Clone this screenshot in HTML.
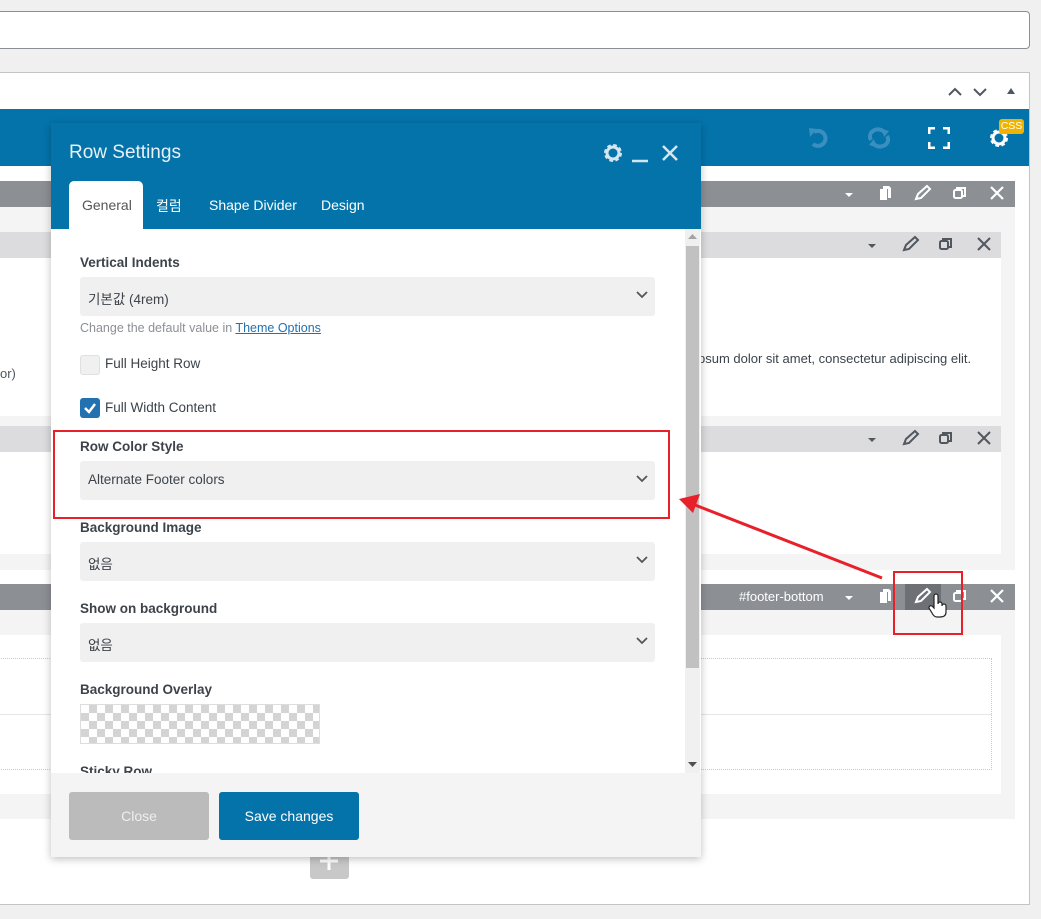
<!DOCTYPE html>
<html><head><meta charset="utf-8"><style>
*{box-sizing:border-box;margin:0;padding:0}
body{width:1041px;height:919px;background:#f0f0f1;position:relative;overflow:hidden;font-family:"Liberation Sans","Noto Sans CJK KR",sans-serif;color:#3c434a}
.a{position:absolute}
.ico{position:absolute}
.lbl{position:absolute;left:80px;font-size:13.5px;font-weight:bold;color:#3c434a}
.sel{position:absolute;left:80px;width:575px;height:39px;background:#f0f0f0;border-radius:3px;font-size:13.5px;color:#3c434a;padding:11px 8px}
.sel svg{position:absolute;right:7px;top:14px}
</style></head><body>
<div class="a" style="left:-4px;top:11px;width:1034px;height:38px;background:#fff;border:1px solid #8c8f94;border-radius:4px"></div>
<div class="a" style="left:-2px;top:72px;width:1032px;height:833px;background:#fff;border:1px solid #c3c4c7"></div>
<svg class="ico" style="left:946px;top:84px" width="70" height="14" viewBox="0 0 70 14">
<path d="M3 11 L9 5 L15 11" stroke="#50575e" stroke-width="2" fill="none"/>
<path d="M28 5 L34 11 L40 5" stroke="#50575e" stroke-width="2" fill="none"/>
<path d="M61 10 L65 4 L69 10Z" fill="#50575e"/></svg>
<div class="a" style="left:0;top:109px;width:1029px;height:57px;background:#0473aa"></div>
<svg class="ico" style="left:806px;top:125px" width="26" height="26" viewBox="0 0 26 26"><path d="M8 7 A7.5 7.5 0 1 1 7 19" stroke="#3b8fbf" stroke-width="4" fill="none"/><path d="M3 3 L11 4 L4 12Z" fill="#3b8fbf"/></svg>
<svg class="ico" style="left:866px;top:126px" width="26" height="24" viewBox="0 0 26 24"><path d="M5 14 A8 7 0 0 1 19 7 M21 10 A8 7 0 0 1 7 17" stroke="#3b8fbf" stroke-width="4" fill="none"/><path d="M16 3 L23 5 L18 11Z M10 21 L3 19 L8 13Z" fill="#3b8fbf"/></svg>
<svg class="ico" style="left:928px;top:127px" width="22" height="22" viewBox="0 0 22 22"><path d="M1 7V1H7 M15 1H21V7 M21 15V21H15 M7 21H1V15" stroke="#fff" stroke-width="3" fill="none"/></svg>
<svg class="ico" style="left:988px;top:127px" width="22" height="22" viewBox="0 0 22 22"><circle cx="11" cy="11" r="7" stroke="#fff" stroke-width="4" fill="none" stroke-dasharray="3.2 2.3"/><circle cx="11" cy="11" r="6" stroke="#fff" stroke-width="3" fill="none"/></svg>
<div class="a" style="left:999px;top:119px;width:25px;height:15px;background:#f0b400;border-radius:3px;color:#fff;font-size:10.5px;text-align:center;line-height:15px">CSS</div>
<div class="a" style="left:0;top:181px;width:1015px;height:26px;background:#8c8f94"></div>
<div class="a" style="left:0;top:207px;width:1015px;height:363px;background:#f4f4f4"></div>
<div class="a" style="left:0;top:232px;width:1001px;height:26px;background:#dcdcde"></div>
<div class="a" style="left:0;top:258px;width:1001px;height:158px;background:#fff"></div>
<div class="a" style="left:0;top:426px;width:1001px;height:26px;background:#dcdcde"></div>
<div class="a" style="left:0;top:452px;width:1001px;height:102px;background:#fff"></div>
<div class="a" style="left:0;top:366px;font-size:13px;color:#50575e">or)</div>
<div class="a" style="left:698px;top:351px;font-size:13px;color:#3c434a">psum dolor sit amet, consectetur adipiscing elit.</div>
<div class="a" style="left:0;top:584px;width:1015px;height:26px;background:#8c8f94"></div>
<div class="a" style="left:0;top:610px;width:1015px;height:209px;background:#f4f4f4"></div>
<div class="a" style="left:0;top:635px;width:1001px;height:159px;background:#fff"></div>
<div class="a" style="left:-2px;top:658px;width:994px;height:112px;border:1px dotted #c8c8c8"></div>
<div class="a" style="left:0;top:714px;width:992px;height:1px;background:#e6e6e6"></div>
<div class="a" style="left:739px;top:589px;font-size:13px;color:#fff">#footer-bottom</div>
<div class="a" style="left:905px;top:584px;width:36px;height:26px;background:#6d7074"></div>
<svg class="ico" style="left:840px;top:183px" width="170" height="22" viewBox="0 0 170 22">
<path d="M5 10 L13 10 L9 14Z" fill="#fff"/>
<path d="M40 6h7v11h-7z" fill="#fff"/><path d="M43 3h6l2 2v10h-3V6h-5z" fill="#fff"/>
<path d="M76 16 L78 11 L87 3 L90 6 L81 15Z" stroke="#fff" stroke-width="2" fill="none"/>
<rect x="114" y="7" width="8" height="8" rx="1.5" stroke="#fff" stroke-width="2" fill="none"/><path d="M117 7V5h8v8h-3" stroke="#fff" stroke-width="2" fill="none"/>
<path d="M151 4 L163 16 M163 4 L151 16" stroke="#fff" stroke-width="2.2"/></svg>
<svg class="ico" style="left:864px;top:234px" width="140" height="22" viewBox="0 0 140 22">
<path d="M4 10 L12 10 L8 14Z" fill="#50575e"/>
<path d="M40 16 L42 11 L51 3 L54 6 L45 15Z" stroke="#50575e" stroke-width="2" fill="none"/>
<rect x="76" y="7" width="8" height="8" rx="1.5" stroke="#50575e" stroke-width="2" fill="none"/><path d="M79 7V5h8v8h-3" stroke="#50575e" stroke-width="2" fill="none"/>
<path d="M114 4 L126 16 M126 4 L114 16" stroke="#50575e" stroke-width="2"/></svg>
<svg class="ico" style="left:864px;top:428px" width="140" height="22" viewBox="0 0 140 22">
<path d="M4 10 L12 10 L8 14Z" fill="#50575e"/>
<path d="M40 16 L42 11 L51 3 L54 6 L45 15Z" stroke="#50575e" stroke-width="2" fill="none"/>
<rect x="76" y="7" width="8" height="8" rx="1.5" stroke="#50575e" stroke-width="2" fill="none"/><path d="M79 7V5h8v8h-3" stroke="#50575e" stroke-width="2" fill="none"/>
<path d="M114 4 L126 16 M126 4 L114 16" stroke="#50575e" stroke-width="2"/></svg>
<svg class="ico" style="left:840px;top:586px" width="170" height="22" viewBox="0 0 170 22">
<path d="M5 10 L13 10 L9 14Z" fill="#fff"/>
<path d="M40 6h7v11h-7z" fill="#fff"/><path d="M43 3h6l2 2v10h-3V6h-5z" fill="#fff"/>
<path d="M76 16 L78 11 L87 3 L90 6 L81 15Z" stroke="#fff" stroke-width="2" fill="none"/>
<rect x="114" y="7" width="8" height="8" rx="1.5" stroke="#fff" stroke-width="2" fill="none"/><path d="M117 7V5h8v8h-3" stroke="#fff" stroke-width="2" fill="none"/>
<path d="M151 4 L163 16 M163 4 L151 16" stroke="#fff" stroke-width="2.2"/></svg>
<svg class="ico" style="left:928px;top:593px" width="20" height="26" viewBox="0 0 20 26"><path d="M6 3 a2 2 0 0 1 4 0 v8 a2 2 0 0 1 4 0 v2 a2 2 0 0 1 4 0 v6 q0 5 -6 5 h-3 q-3 0 -5 -4 l-3 -5 a2 2 0 0 1 3 -2 l2 2Z" fill="#fff" stroke="#222" stroke-width="1.2"/></svg>
<div class="a" style="left:310px;top:837px;width:39px;height:42px;background:#c8c8c8;border-radius:3px"></div>
<svg class="ico" style="left:318px;top:850px" width="22" height="22"><path d="M11 2V20M2 11H20" stroke="#fff" stroke-width="3"/></svg>
<div class="a" style="left:51px;top:123px;width:650px;height:734px;background:#fff;box-shadow:0 2px 8px rgba(0,0,0,.25)"></div>
<div class="a" style="left:51px;top:123px;width:650px;height:106px;background:#0473aa"></div>
<div class="a" style="left:69px;top:142px;font-size:19px;color:#e8f1f7">Row Settings</div>
<svg class="ico" style="left:602px;top:142px" width="80" height="22" viewBox="0 0 80 22">
<circle cx="11" cy="11" r="7" stroke="#d5e6f0" stroke-width="4" fill="none" stroke-dasharray="3.2 2.3"/><circle cx="11" cy="11" r="6" stroke="#d5e6f0" stroke-width="3" fill="none"/>
<path d="M30 19H46" stroke="#d5e6f0" stroke-width="2.5"/>
<path d="M61 4 L75 18 M75 4 L61 18" stroke="#d5e6f0" stroke-width="2.5"/></svg>
<div class="a" style="left:69px;top:181px;width:74px;height:48px;background:#fff;border-radius:5px 5px 0 0"></div>
<div class="a" style="left:82px;top:197px;font-size:14px;color:#555">General</div>
<div class="a" style="left:156px;top:196px;font-size:14px;color:#fff">컬럼</div>
<div class="a" style="left:209px;top:197px;font-size:14px;color:#fff">Shape Divider</div>
<div class="a" style="left:321px;top:197px;font-size:14px;color:#fff">Design</div>
<div class="a" style="left:685px;top:229px;width:15px;height:544px;background:#f0f0f0"></div>
<div class="a" style="left:686px;top:246px;width:13px;height:422px;background:#c1c1c1"></div>
<svg class="ico" style="left:688px;top:234px" width="9" height="6"><path d="M0 5L4.5 0L9 5Z" fill="#a3a3a3"/></svg>
<svg class="ico" style="left:688px;top:762px" width="9" height="6"><path d="M0 0L4.5 5L9 0Z" fill="#505050"/></svg>
<div class="lbl" style="top:255px">Vertical Indents</div>
<div class="sel" style="top:277px">기본값 (4rem)<svg width="12" height="8"><path d="M1 1L6 6L11 1" stroke="#555" stroke-width="1.8" fill="none"/></svg></div>
<div class="a" style="left:80px;top:321px;font-size:12.5px;color:#8c8f94">Change the default value in <span style="color:#2271b1;text-decoration:underline">Theme Options</span></div>
<div class="a" style="left:80px;top:355px;width:20px;height:20px;background:#f0f0f0;border:1px solid #e0e0e0;border-radius:3px"></div>
<div class="a" style="left:105px;top:356px;font-size:13.5px">Full Height Row</div>
<div class="a" style="left:80px;top:398px;width:20px;height:20px;background:#2271b1;border-radius:3px"></div>
<svg class="ico" style="left:83px;top:401px" width="14" height="14"><path d="M2 7L6 11L12 3" stroke="#fff" stroke-width="2.5" fill="none"/></svg>
<div class="a" style="left:105px;top:400px;font-size:13.5px">Full Width Content</div>
<div class="lbl" style="top:439px">Row Color Style</div>
<div class="sel" style="top:461px">Alternate Footer colors<svg width="12" height="8"><path d="M1 1L6 6L11 1" stroke="#555" stroke-width="1.8" fill="none"/></svg></div>
<div class="lbl" style="top:520px">Background Image</div>
<div class="sel" style="top:542px">없음<svg width="12" height="8"><path d="M1 1L6 6L11 1" stroke="#555" stroke-width="1.8" fill="none"/></svg></div>
<div class="lbl" style="top:601px">Show on background</div>
<div class="sel" style="top:623px">없음<svg width="12" height="8"><path d="M1 1L6 6L11 1" stroke="#555" stroke-width="1.8" fill="none"/></svg></div>
<div class="lbl" style="top:682px">Background Overlay</div>
<div class="a" style="left:80px;top:704px;width:240px;height:40px;border:1px solid #ddd;background-color:#fff;background-image:linear-gradient(45deg,#d4d4d4 25%,transparent 25%,transparent 75%,#d4d4d4 75%),linear-gradient(45deg,#d4d4d4 25%,transparent 25%,transparent 75%,#d4d4d4 75%);background-size:16px 16px;background-position:0 0,8px 8px"></div>
<div class="lbl" style="top:764px;height:9px;overflow:hidden">Sticky Row</div>
<div class="a" style="left:51px;top:773px;width:650px;height:84px;background:#f4f4f4"></div>
<div class="a" style="left:69px;top:792px;width:140px;height:48px;background:#bbb;border-radius:3px;color:#eee;font-size:14px;text-align:center;line-height:48px">Close</div>
<div class="a" style="left:219px;top:792px;width:140px;height:48px;background:#0473aa;border-radius:3px;color:#fff;font-size:14px;text-align:center;line-height:48px">Save changes</div>
<div class="a" style="left:53px;top:430px;width:617px;height:89px;border:2.5px solid #e8202a"></div>
<div class="a" style="left:893px;top:571px;width:70px;height:64px;border:2.5px solid #e8202a"></div>
<svg class="ico" style="left:0;top:0" width="1041" height="919"><path d="M882 578 L695 505" stroke="#e8202a" stroke-width="3"/><path d="M679 499 L700 494 L693 513Z" fill="#e8202a"/></svg>
</body></html>
